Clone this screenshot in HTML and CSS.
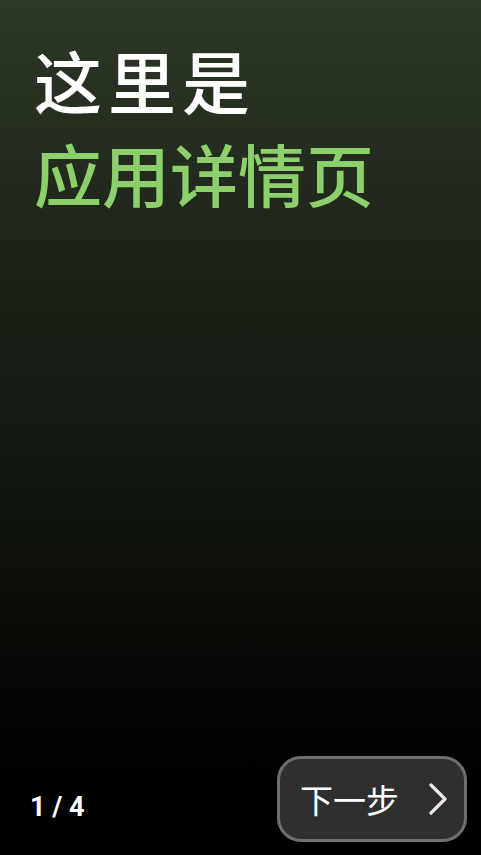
FILE: index.html
```html
<!DOCTYPE html>
<html lang="zh-CN">
<head>
<meta charset="utf-8">
<link rel="stylesheet" href="styles.css">
</head>
<body>
<div class="page">
  <div class="title">
    <div class="line1">这里是</div>
    <div class="line2">应用详情页</div>
  </div>
  <div class="footer">
    <div class="count">1 / 4</div>
    <button class="next">
      <span class="next-label">下一步</span>
      <svg class="chev" width="20" height="32" viewBox="0 0 20 32"><path d="M3 2 L17 16 L3 30" fill="none" stroke="#f2e8e8" stroke-width="3.2" stroke-linecap="round" stroke-linejoin="round"/></svg>
    </button>
  </div>
</div>
</body>
</html>
```
FILE: styles.css
```css
html, body {
  margin: 0;
  padding: 0;
  background: #000;
}
.page {
  width: 481px;
  height: 855px;
  box-sizing: border-box;
  display: flex;
  flex-direction: column;
  justify-content: space-between;
  background: linear-gradient(to bottom, #2d3826 0%, #1a2117 35%, #0d100b 65%, #000 92%);
  font-family: "Noto Sans CJK SC", "Noto Sans", sans-serif;
  overflow: hidden;
}
.title {
  padding: 33px 0 0 34px;
  font-weight: 500;
  font-size: 68px;
  line-height: 93px;
}
.line1 { color: #ffffff; letter-spacing: 6px; }
.line2 { color: #8ccf6b; }
.footer {
  display: flex;
  align-items: center;
  justify-content: space-between;
  padding: 0 14px 13px 30px;
}
.count {
  font-family: Roboto, "Noto Sans", sans-serif;
  font-weight: 700;
  font-size: 27px;
  color: #fff;
  padding-top: 16px;
}
.next {
  width: 190px;
  height: 86px;
  box-sizing: border-box;
  border: 3px solid #6f6f6f;
  border-radius: 24px;
  background: #2f2f2f;
  display: flex;
  align-items: center;
  justify-content: space-between;
  padding: 0 16px 0 20px;
  color: #fff;
}
.next-label {
  font-family: "Noto Sans CJK SC", sans-serif;
  font-weight: 400;
  font-size: 33px;
  line-height: 1;
}
.chev { display: block; }
```
